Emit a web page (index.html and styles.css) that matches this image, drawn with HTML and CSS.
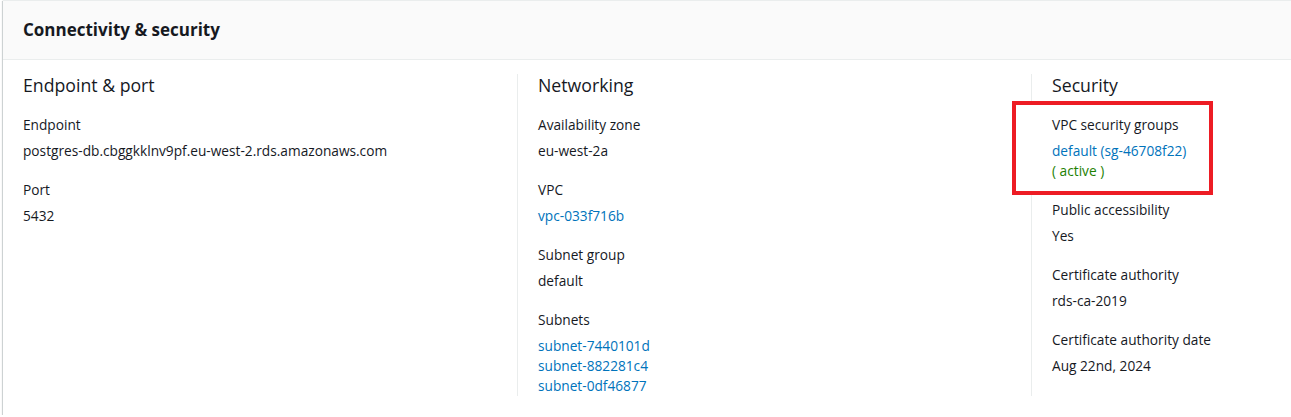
FILE: index.html
```html
<!DOCTYPE html>
<html lang="en">
<head>
<meta charset="utf-8">
<title>Connectivity &amp; security</title>
<link rel="stylesheet" href="styles.css">
</head>
<body>
<div class="panel">
  <div class="panel-header">
    <h2>Connectivity &amp; security</h2>
  </div>
  <div class="panel-body">
    <div class="col">
      <h3>Endpoint &amp; port</h3>
      <div class="kv">
        <div class="label">Endpoint</div>
        <div class="value">postgres-db.cbggkklnv9pf.eu-west-2.rds.amazonaws.com</div>
      </div>
      <div class="kv">
        <div class="label">Port</div>
        <div class="value">5432</div>
      </div>
    </div>
    <div class="col divided">
      <h3>Networking</h3>
      <div class="kv">
        <div class="label">Availability zone</div>
        <div class="value">eu-west-2a</div>
      </div>
      <div class="kv">
        <div class="label">VPC</div>
        <div class="value"><a class="link" href="#">vpc-033f716b</a></div>
      </div>
      <div class="kv">
        <div class="label">Subnet group</div>
        <div class="value">default</div>
      </div>
      <div class="kv">
        <div class="label">Subnets</div>
        <div class="value">
          <a class="link block" href="#">subnet-7440101d</a>
          <a class="link block" href="#">subnet-882281c4</a>
          <a class="link block" href="#">subnet-0df46877</a>
        </div>
      </div>
    </div>
    <div class="col divided">
      <h3>Security</h3>
      <div class="kv highlight">
        <div class="label">VPC security groups</div>
        <div class="value">
          <a class="link block" href="#">default (sg-46708f22)</a>
          <span class="status block">( active )</span>
        </div>
      </div>
      <div class="kv">
        <div class="label">Public accessibility</div>
        <div class="value">Yes</div>
      </div>
      <div class="kv">
        <div class="label">Certificate authority</div>
        <div class="value">rds-ca-2019</div>
      </div>
      <div class="kv">
        <div class="label">Certificate authority date</div>
        <div class="value">Aug 22nd, 2024</div>
      </div>
    </div>
  </div>
</div>
</body>
</html>
```
FILE: styles.css
```css
html, body {
  margin: 0;
  padding: 0;
  background: #ffffff;
  overflow: hidden;
}

body {
  font-family: "Open Sans", "Liberation Sans", Arial, sans-serif;
  font-size: 13.7px;
  color: #16191f;
}

.panel {
  margin-left: 3px;
  width: 1320px;
  background: #ffffff;
  border-top: 1px solid #eaeded;
  box-shadow: 0 1px 1px 0 rgba(0, 28, 36, 0.3), -1px 1px 1px 0 rgba(0, 28, 36, 0.15);
}

.panel-header {
  background: #fafafa;
  border-bottom: 1px solid #eaeded;
  padding: 18px 20px;
}

.panel-header h2 {
  margin: 0;
  font-size: 17px;
  line-height: 22px;
  font-weight: 700;
}

.panel-body {
  display: grid;
  grid-template-columns: 494px 514px 1fr;
  padding: 14px 0 19px 20px;
}

.col {
  display: flex;
  flex-direction: column;
  gap: 18px;
  box-sizing: border-box;
}

.col.divided {
  border-left: 1px solid #eaeded;
  padding-left: 20px;
}

.col h3 {
  margin: 0;
  font-size: 17.7px;
  line-height: 22px;
  font-weight: 400;
}

.kv {
  display: flex;
  flex-direction: column;
  gap: 5px;
}

.label {
  line-height: 22px;
}

.value {
  line-height: 20px;
}

.link {
  color: #0073bb;
  text-decoration: none;
}

.block {
  display: block;
}

.status {
  color: #1d8102;
}

.highlight {
  position: relative;
}

.highlight::before {
  content: "";
  position: absolute;
  left: -40px;
  top: -13px;
  width: 201px;
  height: 94px;
  box-sizing: border-box;
  border: 4.5px solid #ed1c24;
  background: #ffffff;
}

.highlight > * {
  position: relative;
}
```
